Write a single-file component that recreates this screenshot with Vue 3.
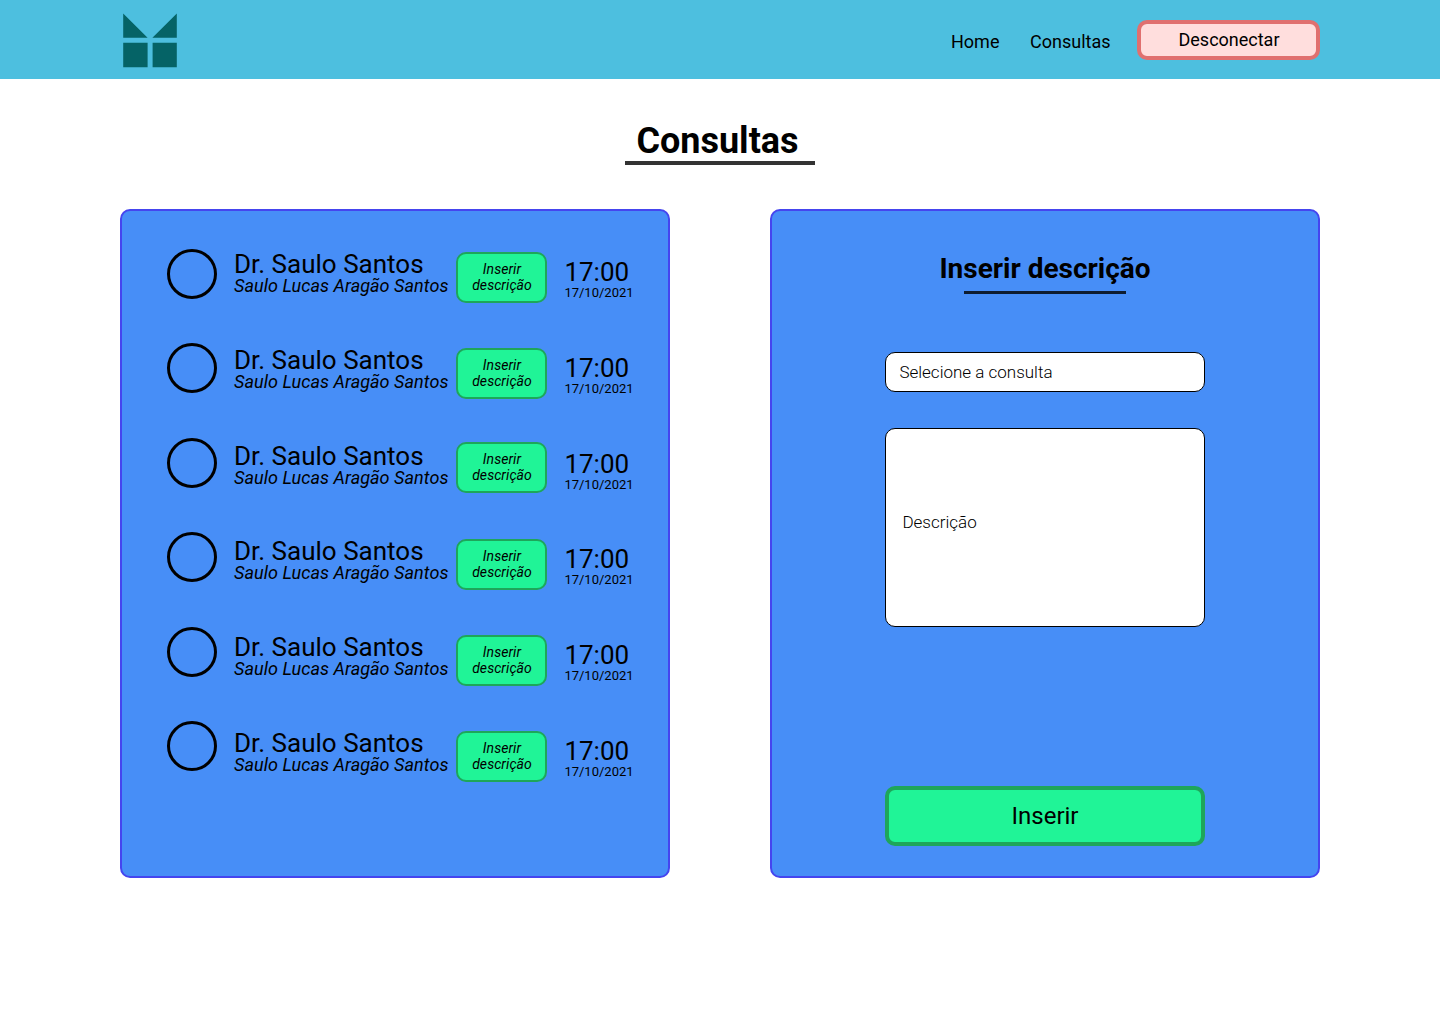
<script setup>
const consultas = Array.from({ length: 6 }, (_, id) => ({
  id,
  medico: 'Dr. Saulo Santos',
  paciente: 'Saulo Lucas Aragão Santos',
  hora: '17:00',
  data: '17/10/2021',
}))
</script>

<template>
  <div class="page">
    <header class="topbar">
      <svg class="logo" width="54" height="55" viewBox="0 0 54 55" aria-hidden="true">
        <path d="M.2 .5V24.7H24.6ZM53.8 .5V24.7H29.4ZM.2 29.7H24.6V54.3H.2ZM29.6 29.7H53.8V54.3H29.6Z" />
      </svg>
      <nav class="nav">
        <a class="link home">Home</a>
        <a class="link">Consultas</a>
        <button class="logout">Desconectar</button>
      </nav>
    </header>

    <h1 class="title"><span>Consultas</span></h1>

    <main class="panels">
      <section class="panel list">
        <div class="avatars">
          <span v-for="c in consultas" :key="c.id" class="avatar"></span>
        </div>
        <div class="names">
          <div v-for="c in consultas" :key="c.id" class="name">
            <div class="doctor">{{ c.medico }}</div>
            <div class="patient">{{ c.paciente }}</div>
          </div>
        </div>
        <div class="actions">
          <button v-for="c in consultas" :key="c.id" class="insert">Inserir<br />descrição</button>
        </div>
        <div class="times">
          <div v-for="c in consultas" :key="c.id" class="time">
            <div class="hour">{{ c.hora }}</div>
            <div class="date">{{ c.data }}</div>
          </div>
        </div>
      </section>

      <section class="panel form">
        <h2 class="subtitle">Inserir descrição</h2>
        <div class="rule"></div>
        <div class="field select">Selecione a consulta</div>
        <div class="field area">Descrição</div>
        <button class="submit">Inserir</button>
      </section>
    </main>
  </div>
</template>

<style>
body {
  margin: 0;
  background: #fff;
}
</style>

<style scoped>
.page {
  width: 1440px;
  height: 1024px;
  overflow: hidden;
  font-family: Roboto, sans-serif;
  color: #000;
}
.page *,
.page {
  box-sizing: border-box;
}
button {
  padding: 0;
  margin: 0;
  font-family: inherit;
  color: inherit;
}
.topbar {
  display: flex;
  justify-content: space-between;
  align-items: flex-start;
  height: 79px;
  padding: 0 120px 0 123px;
  background: #4dbfdf;
}
.logo {
  display: block;
  margin-top: 13px;
  fill: #056366;
}
.nav {
  display: flex;
  align-items: flex-start;
  padding-top: 20px;
}
.link {
  width: 81px;
  margin: 11px 26px 0 0;
  font-size: 18px;
  line-height: 21px;
}
.home {
  width: 49px;
  margin-right: 30px;
}
.logout {
  width: 183px;
  height: 40px;
  padding: 0 0 2px 1px;
  border: 4px solid #e0706f;
  border-radius: 10px;
  background: #ffdedd;
  font-size: 18px;
  line-height: 21px;
}
.title {
  width: 190px;
  height: 45px;
  margin: 41px auto 0;
  padding-right: 5px;
  border-bottom: 4px solid #333;
  font-size: 36px;
  line-height: 42px;
  text-align: center;
}
.panels {
  display: flex;
  justify-content: space-between;
  margin: 44px 120px 0;
}
.panel {
  width: 550px;
  height: 669px;
  border: 2px solid #4545ef;
  border-radius: 10px;
  background: #478ef7;
}
.list {
  display: flex;
  align-items: flex-start;
  padding: 38px 0 0 45px;
}
.avatars,
.names,
.times {
  display: flex;
  flex-direction: column;
  justify-content: space-between;
}
.avatars {
  width: 67px;
  height: 522px;
}
.avatar {
  width: 50px;
  height: 50px;
  border: 3px solid #000;
  border-radius: 50%;
}
.names {
  width: 222px;
  height: 523px;
  margin-top: 2px;
  white-space: nowrap;
}
.doctor {
  font-size: 26px;
  line-height: 26px;
}
.patient {
  font-size: 18px;
  font-style: italic;
  line-height: 18px;
  letter-spacing: 0.06px;
}
.actions {
  display: flex;
  flex-direction: column;
  gap: 45px;
  width: 108.4px;
  margin-top: 3px;
}
.insert {
  width: 91px;
  height: 51px;
  padding: 0 0 2px 1px;
  border: 2px solid #1ea65a;
  border-radius: 10px;
  background: #20f497;
  font-size: 14px;
  font-style: italic;
  line-height: 16px;
  letter-spacing: 0.06px;
}
.insert:nth-child(3) {
  margin-top: -2px;
}
.insert:nth-child(4) {
  margin-top: 1px;
}
.times {
  height: 520px;
  margin-top: 10px;
}
.hour {
  font-size: 26px;
  line-height: 26px;
}
.date {
  font-size: 13px;
  line-height: 15px;
}
.form {
  display: flex;
  flex-direction: column;
  align-items: center;
}
.subtitle {
  margin: 41px 0 0;
  font-size: 28px;
  line-height: 33px;
}
.rule {
  width: 162px;
  height: 3px;
  margin-top: 6px;
  background: #0e1d31;
}
.field {
  display: flex;
  align-items: center;
  width: 320px;
  border: 1px solid #000;
  border-radius: 10px;
  background: #fff;
  font-size: 17px;
  font-weight: 300;
}
.select {
  height: 40px;
  margin-top: 58px;
  padding-left: 13.4px;
}
.area {
  height: 199px;
  margin-top: 36px;
  padding: 0 0 11px 16.4px;
}
.submit {
  width: 320px;
  height: 60px;
  margin-top: 159px;
  border: 4px solid #1ea65a;
  border-radius: 10px;
  background: #20f497;
  font-size: 24px;
  line-height: 28px;
}
</style>
